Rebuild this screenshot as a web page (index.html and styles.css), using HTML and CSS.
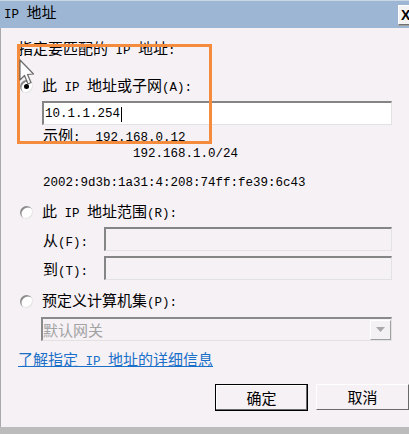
FILE: index.html
```html
<!DOCTYPE html>
<html lang="zh-CN">
<head>
<meta charset="utf-8">
<title>IP 地址</title>
<link rel="stylesheet" href="styles.css">
</head>
<body>
<div class="window">
  <div class="titlebar">
    <span class="title"><span class="m">IP </span>地址</span>
    <span class="close">X</span>
  </div>
  <div class="content">
    <div class="line intro">指定要匹配的<span class="m"> IP </span>地址<span class="m">:</span></div>
    <div class="row option opt1"><span class="radio checked"></span><span>此<span class="m"> IP </span>地址或子网<span class="m">(A):</span></span></div>
    <div class="field field-main"><span class="m">10.1.1.254</span><span class="caret"></span></div>
    <div class="line example">示例<span class="m">:</span><span class="m ex-val">192.168.0.12</span></div>
    <div class="line example2"><span class="m">192.168.1.0/24</span></div>
    <div class="line ipv6"><span class="m">2002:9d3b:1a31:4:208:74ff:fe39:6c43</span></div>
    <div class="row option opt2"><span class="radio"></span><span>此<span class="m"> IP </span>地址范围<span class="m">(R):</span></span></div>
    <div class="range range-from"><span class="range-label">从<span class="m">(F):</span></span><span class="field field-off"></span></div>
    <div class="range range-to"><span class="range-label">到<span class="m">(T):</span></span><span class="field field-off"></span></div>
    <div class="row option opt3"><span class="radio"></span><span>预定义计算机集<span class="m">(P):</span></span></div>
    <div class="select"><span class="select-text">默认网关</span><span class="select-btn"><svg width="9" height="5" viewBox="0 0 9 5"><path d="M0 0H9L4.5 5Z" fill="#a8a8a8"/></svg></span></div>
    <div class="line link"><span class="link-text">了解指定<span class="m"> IP </span>地址的详细信息</span></div>
    <div class="buttons">
      <span class="btn btn-default">确定</span>
      <span class="btn">取消</span>
    </div>
  </div>
  <div class="bottombar"></div>
  <div class="highlight"></div>
  <svg class="cursor" width="16" height="27" viewBox="0 0 16 27"><path d="M1 1 L1 21 L5.5 16.5 L9 25 L12 23.5 L8.5 15.5 L14.5 15 Z" fill="#fff" stroke="#555" stroke-width="1.2" stroke-linejoin="round" opacity="0.85"/></svg>
</div>
</body>
</html>
```
FILE: styles.css
```css
html, body {
  margin: 0;
  padding: 0;
  background: #f5f1f5;
}
.window {
  position: relative;
  width: 409px;
  height: 434px;
  overflow: hidden;
  display: flex;
  flex-direction: column;
  background: #f5f1f5;
  font-family: "Noto Sans CJK SC", "Noto Sans", sans-serif;
  font-size: 15px;
  color: #000;
}
.m {
  font-family: "Liberation Mono", monospace;
  font-size: 12.5px;
}
.titlebar {
  height: 28px;
  flex: none;
  background: #9cb6d4;
  border-top: 1px solid #c8d6e6;
  box-sizing: border-box;
  display: flex;
  align-items: center;
  padding-left: 4px;
  position: relative;
}
.title {
  line-height: 16px;
  margin-top: -2px;
  white-space: pre;
}
.close {
  position: absolute;
  left: 398px;
  top: 4px;
  width: 24px;
  height: 20px;
  box-sizing: border-box;
  background: #f3f3f3;
  border: 1px solid #fff;
  border-right-color: #707070;
  border-bottom-color: #707070;
  box-shadow: 0 1px 0 #a0a0a0;
  font-family: "Liberation Sans", sans-serif;
  font-weight: bold;
  font-size: 14px;
  line-height: 18px;
  padding-left: 2px;
}
.content {
  flex: 1;
  display: flex;
  flex-direction: column;
  padding: 0 17px 0 17px;
  border-left: 1px solid #a9a9a9;
}
.row {
  height: 16px;
  line-height: 16px;
  display: flex;
  align-items: center;
  white-space: pre;
}
.line {
  height: 16px;
  line-height: 16px;
  white-space: pre;
}
.intro { margin-top: 12px; }
.option { gap: 9px; }
.opt1 { margin-top: 22px; }
.opt2 { margin-top: 16px; }
.opt3 { margin-top: 13px; }
.radio {
  width: 13px;
  height: 13px;
  margin-left: 2px;
  border-radius: 50%;
  background: #fff;
  box-sizing: border-box;
  box-shadow: inset 1.5px 1.5px 0 #8a8a8a, inset -1px -1px 0 #e4e4e4;
  position: relative;
  flex: none;
}
.radio.checked::after {
  content: "";
  position: absolute;
  left: 4px;
  top: 4px;
  width: 5px;
  height: 5px;
  border-radius: 50%;
  background: #000;
}
.field {
  box-sizing: border-box;
  height: 24px;
  border-top: 2px solid #858585;
  border-left: 2px solid #858585;
  border-right: 1px solid #e2e2e2;
  border-bottom: 1px solid #e2e2e2;
  background: #fff;
}
.field-main {
  margin-top: 7px;
  margin-left: 24px;
  display: flex;
  align-items: center;
  padding-left: 1px;
  padding-top: 1px;
}
.caret {
  width: 1px;
  height: 15px;
  background: #000;
  margin-left: 1px;
}
.example {
  margin-top: 2px;
  margin-left: 25px;
}
.ex-val { margin-left: 15px; }
.example2 { margin-left: 115px; }
.ipv6 {
  margin-top: 13px;
  margin-left: 25px;
}
.range {
  display: flex;
  align-items: center;
  height: 24px;
  margin-left: 25px;
}
.range-from { margin-top: 7px; }
.range-to { margin-top: 5px; }
.range-label {
  width: 61px;
  flex: none;
  white-space: nowrap;
}
.field-off {
  flex: 1;
  background: #f5f1f5;
}
.select {
  margin-top: 8px;
  margin-left: 23px;
  height: 24px;
  box-sizing: border-box;
  border-top: 2px solid #8a8a8a;
  border-left: 2px solid #8a8a8a;
  border-right: 1px solid #e2e2e2;
  border-bottom: 1px solid #e2e2e2;
  display: flex;
  align-items: center;
  justify-content: space-between;
}
.select-text {
  color: #a3a3a3;
  line-height: 16px;
}
.select-btn {
  width: 21px;
  height: 20px;
  box-sizing: border-box;
  background: #f3f1f3;
  border: 1px solid #fff;
  border-right-color: #a0a0a0;
  border-bottom-color: #a0a0a0;
  display: flex;
  align-items: center;
  justify-content: center;
}
.link {
  margin-top: 10px;
}
.link-text {
  color: #1a70c8;
  text-decoration: underline;
  text-decoration-thickness: 1px;
  text-underline-offset: 1px;
}
.buttons {
  margin-top: 17px;
  margin-right: -17px;
  display: flex;
  justify-content: flex-end;
  gap: 8px;
}
.btn {
  width: 93px;
  height: 26px;
  box-sizing: border-box;
  border: 1px solid #fff;
  border-right-color: #6a6a6a;
  border-bottom-color: #6a6a6a;
  background: #f5f1f5;
  display: flex;
  align-items: center;
  justify-content: center;
  line-height: 16px;
}
.btn-default {
  height: 27px;
  border: 1px solid #000;
  box-shadow: inset -1px -1px 0 #6a6a6a, inset 1px 1px 0 #fff;
}
.bottombar {
  height: 7px;
  flex: none;
  background: #bcbcbc;
}
.highlight {
  position: absolute;
  left: 17px;
  top: 44px;
  width: 195px;
  height: 100px;
  box-sizing: border-box;
  border: 3px solid #f58b3c;
}
.cursor {
  position: absolute;
  left: 19px;
  top: 59px;
}
```
